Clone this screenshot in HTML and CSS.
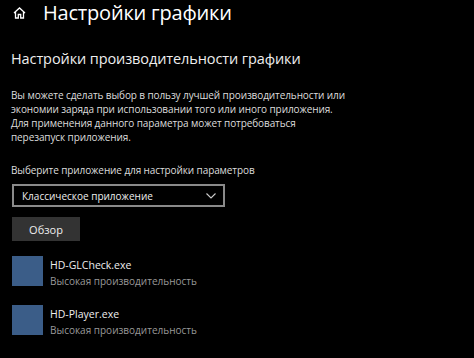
FILE: index.html
```html
<!DOCTYPE html>
<html lang="ru">

<head>
    <meta charset="UTF-8">
    <title>Настройки графики</title>
    <link rel="stylesheet" href="styles.css">
</head>

<body>
    <div class="page">
        <div class="header">
            <svg class="home" width="13" height="12" viewBox="0 0 13 12">
                <path d="M1 6 L6.5 1 L12 6 M2.5 4.8 V11 H5.3 V7.5 H7.7 V11 H10.5 V4.8" fill="none" stroke="#fff" stroke-width="1.3"/>
            </svg>
            <h1>Настройки графики</h1>
        </div>

        <h2>Настройки производительности графики</h2>

        <p class="desc">Вы можете сделать выбор в пользу лучшей производительности или<br>
            экономии заряда при использовании того или иного приложения.<br>
            Для применения данного параметра может потребоваться<br>
            перезапуск приложения.</p>

        <div class="label">Выберите приложение для настройки параметров</div>
        <div class="select">
            <span>Классическое приложение</span>
            <svg width="10" height="6" viewBox="0 0 10 6">
                <path d="M0.5 0.5 L5 5 L9.5 0.5" fill="none" stroke="#ccc" stroke-width="1.1"/>
            </svg>
        </div>

        <button class="browse">Обзор</button>

        <!-- список приложений -->
        <div class="apps">
            <div class="app">
                <div class="app-icon"></div>
                <div class="app-info">
                    <div class="app-name">HD-GLCheck.exe</div>
                    <div class="app-mode">Высокая производительность</div>
                </div>
            </div>
            <div class="app">
                <div class="app-icon"></div>
                <div class="app-info">
                    <div class="app-name">HD-Player.exe</div>
                    <div class="app-mode">Высокая производительность</div>
                </div>
            </div>
        </div>
    </div>
</body>

</html>
```

FILE: styles.css
```css
body {
    margin: 0;
    background: #000;
    color: #fff;
    font-family: "Open Sans", "Noto Sans", sans-serif;
}

.page {
    padding: 0 12px;
    width: 474px;
    height: 358px;
    box-sizing: border-box;
    overflow: hidden;
}

.header {
    display: flex;
    align-items: center;
    height: 25px;
}

.home {
    margin-left: 1px;
}

h1 {
    margin: 0 0 0 17px;
    font-size: 20px;
    font-weight: 400;
    letter-spacing: -0.2px;
}

h2 {
    margin: 24px 0 0 -1px;
    font-size: 14.5px;
    font-weight: 400;
    letter-spacing: -0.1px;
    color: #eee;
}

.desc {
    margin: 20px 0 0 -1px;
    font-size: 10px;
    line-height: 14px;
    letter-spacing: -0.1px;
    color: #ddd;
}

.label {
    margin: 19px 0 0 -1px;
    font-size: 10px;
    letter-spacing: -0.1px;
    color: #ddd;
}

.select {
    display: flex;
    justify-content: space-between;
    align-items: center;
    margin-top: 7px;
    width: 213px;
    height: 23px;
    border: 2px solid #8a8a8a;
    box-sizing: border-box;
    padding: 0 7px 0 8px;
    font-size: 10px;
    color: #eee;
}

.browse {
    display: block;
    margin-top: 10px;
    width: 68px;
    height: 24px;
    border: none;
    background: #333;
    color: #eee;
    font-family: inherit;
    font-size: 11px;
}

.apps {
    margin-top: 15px;
}

.app {
    display: flex;
    margin-bottom: 16px;
}

.app-icon {
    width: 31px;
    height: 30px;
    background: #3b5d88;
}

.app-info {
    margin-left: 7px;
    margin-top: 1px;
}

.app-name {
    font-size: 10.5px;
    color: #eee;
    line-height: 16px;
}

.app-mode {
    font-size: 10px;
    color: #999;
    line-height: 16px;
}
```
